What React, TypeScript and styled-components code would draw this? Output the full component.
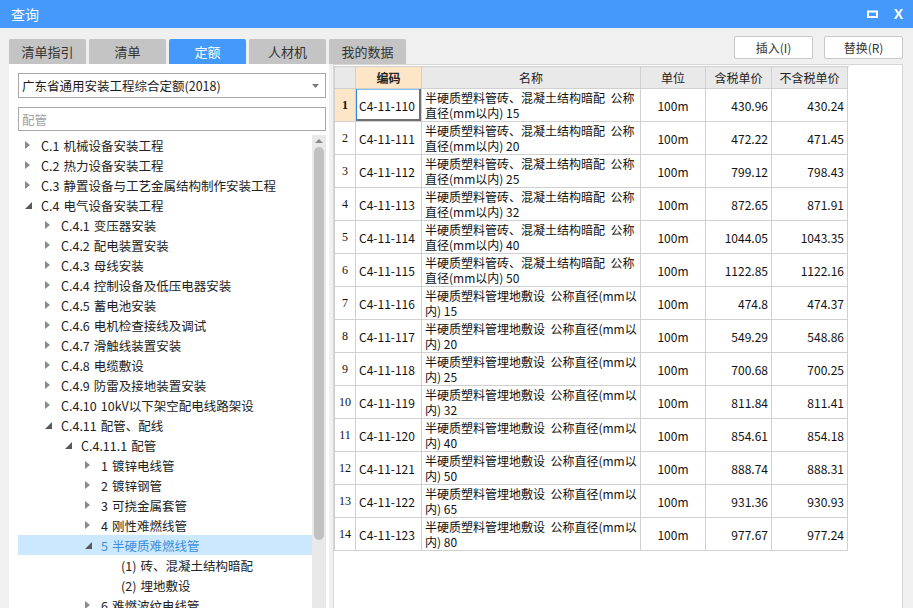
import React from "react";
import styled, { createGlobalStyle } from "styled-components";

const GlobalStyle = createGlobalStyle`
  html, body {
    margin: 0;
    padding: 0;
    background: #f0f0f0;
  }
  #root {
    width: 913px;
    height: 608px;
    overflow: hidden;
  }
`;

const BLUE = "#4499fb";
const FONT = `"Noto Sans CJK SC", "Noto Sans", "Liberation Sans", sans-serif`;

const Win = {
  Frame: styled.div`
    width: 913px;
    height: 608px;
    display: flex;
    flex-direction: column;
    background: #f0f0f0;
    font-family: ${FONT};
    color: #222;
    overflow: hidden;
  `,
  TitleBar: styled.div`
    height: 28px;
    flex: none;
    display: flex;
    align-items: center;
    justify-content: space-between;
    background: ${BLUE};
    color: #fff;
    padding: 0 10px 0 11px;
    font-size: 14px;
  `,
  Actions: styled.div`
    display: flex;
    align-items: center;
    gap: 16px;
  `,
  Close: styled.span`
    font-family: "Liberation Sans", sans-serif;
    font-weight: bold;
    font-size: 14px;
    line-height: 1;
  `,
  Body: styled.div`
    flex: 1;
    min-height: 0;
    display: flex;
    flex-direction: column;
    padding: 8px 10px 0 9px;
  `,
  Toolbar: styled.div`
    height: 28px;
    flex: none;
    display: flex;
    justify-content: space-between;
  `,
  Content: styled.div`
    flex: 1;
    min-height: 0;
    display: flex;
    gap: 4px;
  `,
};

const Tabs = {
  List: styled.div`
    display: flex;
    gap: 3px;
    align-self: flex-end;
  `,
  Tab: styled.div<{ $active?: boolean }>`
    width: 77px;
    height: 25px;
    display: flex;
    align-items: center;
    justify-content: center;
    border-radius: 2px 2px 0 0;
    font-size: 13px;
    background: ${(p) => (p.$active ? BLUE : "#c4c4c4")};
    color: ${(p) => (p.$active ? "#fff" : "#333")};
  `,
  Buttons: styled.div`
    display: flex;
    gap: 11px;
    align-self: flex-start;
  `,
  Button: styled.div`
    width: 77px;
    height: 21px;
    border: 1px solid #c9c9c9;
    border-radius: 2px;
    background: #fff;
    display: flex;
    align-items: center;
    justify-content: center;
    font-size: 12px;
    color: #333;
  `,
};

const Left = {
  Panel: styled.div`
    width: 320px;
    flex: none;
    background: #fff;
    display: flex;
    flex-direction: column;
    padding: 9px 3px 0 9px;
    box-sizing: border-box;
  `,
  Select: styled.div`
    height: 23px;
    border: 1px solid #a8a8a8;
    display: flex;
    align-items: center;
    justify-content: space-between;
    padding: 0 6px 0 3px;
    font-size: 12.5px;
    color: #1a1a1a;
  `,
  Search: styled.div`
    margin-top: 9px;
    height: 22px;
    border: 1px solid #a8a8a8;
    display: flex;
    align-items: center;
    padding: 0 3px;
    font-size: 12.5px;
    color: #a0a0a0;
  `,
  TreeArea: styled.div`
    flex: 1;
    min-height: 0;
    margin-top: 4px;
    display: flex;
  `,
  TreeList: styled.div`
    flex: 1;
    overflow: hidden;
  `,
  Row: styled.div<{ $level: number; $selected?: boolean }>`
    height: 20px;
    display: flex;
    align-items: center;
    padding-left: ${(p) => 5 + p.$level * 20}px;
    font-size: 12.5px;
    white-space: nowrap;
    background: ${(p) => (p.$selected ? "#cce8ff" : "transparent")};
    color: ${(p) => (p.$selected ? "#3b8ee0" : "#222")};
  `,
  Code: styled.span`
    margin-right: 4px;
  `,
  Arrow: styled.span`
    width: 18px;
    flex: none;
    display: flex;
    align-items: center;
    padding-left: 2px;
    box-sizing: border-box;
  `,
  Scrollbar: styled.div`
    width: 14px;
    flex: none;
    background: #e9e9e9;
    display: flex;
    flex-direction: column;
    align-items: center;
  `,
  ScrollUp: styled.div`
    height: 12px;
    display: flex;
    align-items: center;
  `,
  Thumb: styled.div`
    width: 10px;
    height: 393px;
    border-radius: 5px;
    background: #c1c1c1;
  `,
};

const Grid = {
  Panel: styled.div`
    flex: 1;
    background: #fff;
    border: 1px solid #d6d6d6;
    border-bottom: none;
    padding-top: 1px;
  `,
  Table: styled.div`
    width: 514px;
    border-left: 1px solid #d0d0d0;
    border-top: 1px solid #d0d0d0;
    font-size: 12px;
    color: #111;
  `,
  Row: styled.div<{ $head?: boolean }>`
    display: grid;
    grid-template-columns: 21px 66px 219px 65px 66px 76px;
    height: ${(p) => (p.$head ? 22 : 33)}px;
  `,
  Cell: styled.div<{
    $align?: "left" | "center" | "right";
    $head?: boolean;
    $hot?: boolean;
    $focus?: boolean;
  }>`
    display: flex;
    align-items: center;
    justify-content: ${(p) =>
      p.$align === "right" ? "flex-end" : p.$align === "center" ? "center" : "flex-start"};
    text-align: ${(p) => p.$align || "left"};
    padding: 0 3px;
    border-right: 1px solid #d0d0d0;
    border-bottom: 1px solid #d0d0d0;
    overflow: hidden;
    white-space: nowrap;
    line-height: 15px;
    background: ${(p) => (p.$hot ? "#fde5c8" : p.$head ? "#e9e9e9" : "#fff")};
    font-weight: ${(p) => (p.$hot ? "bold" : "normal")};
    color: ${(p) => (p.$head ? "#222" : "#111")};
    box-shadow: ${(p) =>
      p.$focus ? "inset 1px 0 0 #2f86e8, inset -2px -2px 0 #707070, inset 0 1px 0 #8fbff0" : "none"};
  `,
  Index: styled.div<{ $hot?: boolean }>`
    display: flex;
    align-items: center;
    justify-content: center;
    border-right: 1px solid #d0d0d0;
    border-bottom: 1px solid #d0d0d0;
    background: ${(p) => (p.$hot ? "#fde5c8" : "#fff")};
    font-family: "Liberation Serif", serif;
    font-size: 12px;
    font-weight: ${(p) => (p.$hot ? "bold" : "normal")};
  `,
  Name: styled.div`
    line-height: 15px;
  `,
};

const Collapsed = () => (
  <svg width="5" height="8" viewBox="0 0 5 8">
    <path d="M0 0 L5 4 L0 8 Z" fill="#8a8a8a" />
  </svg>
);

const Expanded = () => (
  <svg width="7" height="7" viewBox="0 0 7 7">
    <path d="M7 0 L7 7 L0 7 Z" fill="#5a5a5a" />
  </svg>
);

type TreeItem = { level: number; code: string; label: string; state?: "open" | "closed"; selected?: boolean };

const tree: TreeItem[] = [
  { level: 0, code: "C.1", label: "机械设备安装工程", state: "closed" },
  { level: 0, code: "C.2", label: "热力设备安装工程", state: "closed" },
  { level: 0, code: "C.3", label: "静置设备与工艺金属结构制作安装工程", state: "closed" },
  { level: 0, code: "C.4", label: "电气设备安装工程", state: "open" },
  { level: 1, code: "C.4.1", label: "变压器安装", state: "closed" },
  { level: 1, code: "C.4.2", label: "配电装置安装", state: "closed" },
  { level: 1, code: "C.4.3", label: "母线安装", state: "closed" },
  { level: 1, code: "C.4.4", label: "控制设备及低压电器安装", state: "closed" },
  { level: 1, code: "C.4.5", label: "蓄电池安装", state: "closed" },
  { level: 1, code: "C.4.6", label: "电机检查接线及调试", state: "closed" },
  { level: 1, code: "C.4.7", label: "滑触线装置安装", state: "closed" },
  { level: 1, code: "C.4.8", label: "电缆敷设", state: "closed" },
  { level: 1, code: "C.4.9", label: "防雷及接地装置安装", state: "closed" },
  { level: 1, code: "C.4.10", label: "10kV以下架空配电线路架设", state: "closed" },
  { level: 1, code: "C.4.11", label: "配管、配线", state: "open" },
  { level: 2, code: "C.4.11.1", label: "配管", state: "open" },
  { level: 3, code: "1", label: "镀锌电线管", state: "closed" },
  { level: 3, code: "2", label: "镀锌钢管", state: "closed" },
  { level: 3, code: "3", label: "可挠金属套管", state: "closed" },
  { level: 3, code: "4", label: "刚性难燃线管", state: "closed" },
  { level: 3, code: "5", label: "半硬质难燃线管", state: "open", selected: true },
  { level: 4, code: "(1)", label: "砖、混凝土结构暗配" },
  { level: 4, code: "(2)", label: "埋地敷设" },
  { level: 3, code: "6", label: "难燃波纹电线管", state: "closed" },
];

const nameA = "半硬质塑料管砖、混凝土结构暗配\u00a0\u00a0公称";
const nameB = "半硬质塑料管埋地敷设\u00a0\u00a0公称直径(mm以";

type Item = { code: string; l1: string; l2: string; price: string; net: string };

const rows: Item[] = [
  { code: "C4-11-110", l1: nameA, l2: "直径(mm以内) 15", price: "430.96", net: "430.24" },
  { code: "C4-11-111", l1: nameA, l2: "直径(mm以内) 20", price: "472.22", net: "471.45" },
  { code: "C4-11-112", l1: nameA, l2: "直径(mm以内) 25", price: "799.12", net: "798.43" },
  { code: "C4-11-113", l1: nameA, l2: "直径(mm以内) 32", price: "872.65", net: "871.91" },
  { code: "C4-11-114", l1: nameA, l2: "直径(mm以内) 40", price: "1044.05", net: "1043.35" },
  { code: "C4-11-115", l1: nameA, l2: "直径(mm以内) 50", price: "1122.85", net: "1122.16" },
  { code: "C4-11-116", l1: nameB, l2: "内) 15", price: "474.8", net: "474.37" },
  { code: "C4-11-117", l1: nameB, l2: "内) 20", price: "549.29", net: "548.86" },
  { code: "C4-11-118", l1: nameB, l2: "内) 25", price: "700.68", net: "700.25" },
  { code: "C4-11-119", l1: nameB, l2: "内) 32", price: "811.84", net: "811.41" },
  { code: "C4-11-120", l1: nameB, l2: "内) 40", price: "854.61", net: "854.18" },
  { code: "C4-11-121", l1: nameB, l2: "内) 50", price: "888.74", net: "888.31" },
  { code: "C4-11-122", l1: nameB, l2: "内) 65", price: "931.36", net: "930.93" },
  { code: "C4-11-123", l1: nameB, l2: "内) 80", price: "977.67", net: "977.24" },
];

const tabs = ["清单指引", "清单", "定额", "人材机", "我的数据"];

export default function App() {
  return (
    <>
      <GlobalStyle />
      <Win.Frame>
        <Win.TitleBar>
          <span>查询</span>
          <Win.Actions>
            <svg width="11" height="8" viewBox="0 0 11 8">
              <rect x="1" y="1.5" width="9" height="5.5" fill="none" stroke="#fff" strokeWidth="2" />
            </svg>
            <Win.Close>X</Win.Close>
          </Win.Actions>
        </Win.TitleBar>
        <Win.Body>
          <Win.Toolbar>
            <Tabs.List>
              {tabs.map((t) => (
                <Tabs.Tab key={t} $active={t === "定额"}>
                  {t}
                </Tabs.Tab>
              ))}
            </Tabs.List>
            <Tabs.Buttons>
              <Tabs.Button>插入(I)</Tabs.Button>
              <Tabs.Button>替换(R)</Tabs.Button>
            </Tabs.Buttons>
          </Win.Toolbar>
          <Win.Content>
            <Left.Panel>
              <Left.Select>
                <span>广东省通用安装工程综合定额(2018)</span>
                <svg width="7" height="4" viewBox="0 0 7 4">
                  <path d="M0 0 L7 0 L3.5 4 Z" fill="#7a7a7a" />
                </svg>
              </Left.Select>
              <Left.Search>配管</Left.Search>
              <Left.TreeArea>
                <Left.TreeList>
                  {tree.map((n, i) => (
                    <Left.Row key={i} $level={n.level} $selected={n.selected}>
                      <Left.Arrow>
                        {n.state === "closed" && <Collapsed />}
                        {n.state === "open" && <Expanded />}
                      </Left.Arrow>
                      <Left.Code>{n.code}</Left.Code>
                      {n.label}
                    </Left.Row>
                  ))}
                </Left.TreeList>
                <Left.Scrollbar>
                  <Left.ScrollUp>
                    <svg width="8" height="4" viewBox="0 0 8 4">
                      <path d="M0 4 L4 0 L8 4 Z" fill="#8a8a8a" />
                    </svg>
                  </Left.ScrollUp>
                  <Left.Thumb />
                </Left.Scrollbar>
              </Left.TreeArea>
            </Left.Panel>
            <Grid.Panel>
              <Grid.Table>
                <Grid.Row $head>
                  <Grid.Cell $head />
                  <Grid.Cell $head $hot $align="center">编码</Grid.Cell>
                  <Grid.Cell $head $align="center">名称</Grid.Cell>
                  <Grid.Cell $head $align="center">单位</Grid.Cell>
                  <Grid.Cell $head $align="center">含税单价</Grid.Cell>
                  <Grid.Cell $head $align="center">不含税单价</Grid.Cell>
                </Grid.Row>
                {rows.map((r, i) => (
                  <Grid.Row key={r.code}>
                    <Grid.Index $hot={i === 0}>{i + 1}</Grid.Index>
                    <Grid.Cell $focus={i === 0}>{r.code}</Grid.Cell>
                    <Grid.Cell>
                      <Grid.Name>
                        {r.l1}
                        <br />
                        {r.l2}
                      </Grid.Name>
                    </Grid.Cell>
                    <Grid.Cell $align="center">100m</Grid.Cell>
                    <Grid.Cell $align="right">{r.price}</Grid.Cell>
                    <Grid.Cell $align="right">{r.net}</Grid.Cell>
                  </Grid.Row>
                ))}
              </Grid.Table>
            </Grid.Panel>
          </Win.Content>
        </Win.Body>
      </Win.Frame>
    </>
  );
}
